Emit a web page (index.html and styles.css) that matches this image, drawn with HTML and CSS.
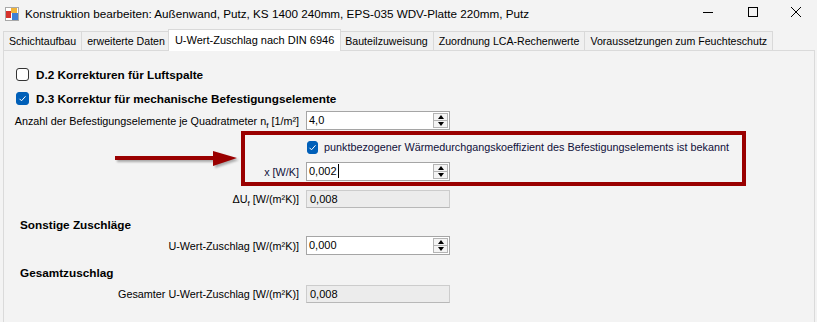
FILE: index.html
```html
<!DOCTYPE html>
<html>

<head>
    <meta charset="utf-8">
    <link rel="stylesheet" href="styles.css">
    <title>Konstruktion bearbeiten</title>
</head>

<body>
    <header class="titlebar">
        <svg class="app-icon" width="15" height="15" viewBox="0 0 15 15">
            <rect x="0.5" y="0.5" width="13" height="13" fill="#fff" stroke="#a8a8a8"/>
            <rect x="1" y="4" width="5" height="7" fill="#d6322c"/>
            <rect x="6" y="1" width="6" height="5" fill="#f0b43a"/>
            <rect x="7" y="6" width="6" height="7" fill="#3d7fd6"/>
        </svg>
        <span class="title">Konstruktion bearbeiten: Außenwand, Putz, KS 1400 240mm, EPS-035 WDV-Platte 220mm, Putz</span>
        <div class="controls">
            <span class="ctl"><svg width="10" height="10" viewBox="0 0 10 10"><path d="M0 5.5h10" stroke="#000" stroke-width="1"/></svg></span>
            <span class="ctl"><svg width="10" height="10" viewBox="0 0 10 10"><rect x="0.5" y="0.5" width="9" height="9" fill="none" stroke="#000"/></svg></span>
            <span class="ctl ctl-close"><svg width="10" height="10" viewBox="0 0 10 10"><path d="M0 0L10 10M10 0L0 10" stroke="#000" stroke-width="1"/></svg></span>
        </div>
    </header>

    <nav class="tabs">
        <span class="tab">Schichtaufbau</span>
        <span class="tab">erweiterte Daten</span>
        <span class="tab active">U-Wert-Zuschlag nach DIN 6946</span>
        <span class="tab">Bauteilzuweisung</span>
        <span class="tab">Zuordnung LCA-Rechenwerte</span>
        <span class="tab">Voraussetzungen zum Feuchteschutz</span>
    </nav>

    <section class="page">
        <div class="check heading row-d2">
            <span class="box"></span>D.2 Korrekturen für Luftspalte
        </div>
        <div class="check heading row-d3">
            <span class="box checked"><svg width="9" height="9" viewBox="0 0 9 9"><path d="M1.5 4.8l2 2 4-4.5" fill="none" stroke="#fff" stroke-width="1"/></svg></span>D.3 Korrektur für mechanische Befestigungselemente
        </div>

        <div class="field row-nf">
            <span class="label">Anzahl der Befestigungselemente je Quadratmeter n<sub>f</sub> [1/m²]</span>
            <div class="spin">
                <span class="value">4,0</span>
                <span class="arrows"><span class="up"></span><span class="down"></span></span>
            </div>
        </div>

        <div class="field row-pkt">
            <span class="label"></span>
            <div class="check inner">
                <span class="box checked"><svg width="9" height="9" viewBox="0 0 9 9"><path d="M1.5 4.8l2 2 4-4.5" fill="none" stroke="#fff" stroke-width="1"/></svg></span>punktbezogener Wärmedurchgangskoeffizient des Befestigungselements ist bekannt
            </div>
        </div>

        <div class="field row-x">
            <span class="label inner">x [W/K]</span>
            <div class="spin">
                <span class="value">0,002<i class="caret"></i></span>
                <span class="arrows"><span class="up"></span><span class="down"></span></span>
            </div>
        </div>

        <div class="field row-du">
            <span class="label">ΔU<sub>f</sub> [W/(m²K)]</span>
            <div class="readonly">0,008</div>
        </div>

        <div class="group-title row-sonst">Sonstige Zuschläge</div>
        <div class="field row-uz">
            <span class="label">U-Wert-Zuschlag [W/(m²K)]</span>
            <div class="spin">
                <span class="value">0,000</span>
                <span class="arrows"><span class="up"></span><span class="down"></span></span>
            </div>
        </div>

        <div class="group-title row-gesamt">Gesamtzuschlag</div>
        <div class="field row-gz">
            <span class="label">Gesamter U-Wert-Zuschlag [W/(m²K)]</span>
            <div class="readonly">0,008</div>
        </div>

        <!-- annotation drawn over the form -->
        <div class="callout"></div>
        <svg class="arrow" width="132" height="24" viewBox="0 0 132 24">
            <rect x="5" y="8" width="99" height="4" fill="#9a0000"/>
            <polygon points="103,3 127,10 103,18" fill="#9a0000"/>
        </svg>
    </section>
</body>

</html>
```

FILE: styles.css
```css
* {
    box-sizing: border-box;
}

html,
body {
    margin: 0;
    width: 817px;
    height: 322px;
    overflow: hidden;
}

body {
    font-family: "Liberation Sans", Arial, sans-serif;
    font-size: 10.8px;
    color: #000;
    background: #f3f3f3;
}

/* title bar */
.titlebar {
    height: 30px;
    display: flex;
    align-items: center;
    background: #f3f3f3;
}

.app-icon {
    margin-left: 5px;
    margin-top: -2px;
}

.title {
    margin-left: 5px;
    font-size: 11.7px;
    margin-top: -4px;
}

.controls {
    margin-left: auto;
    display: flex;
    align-self: stretch;
}

.ctl {
    width: 45px;
    display: flex;
    align-items: center;
    justify-content: center;
    padding-bottom: 6px;
}

.ctl-close {
    width: 42px;
}

/* tabs */
.tabs {
    height: 20px;
    display: flex;
    align-items: flex-end;
    padding-left: 3px;
}

.tab {
    height: 19px;
    padding: 0 5px;
    margin-right: -1px;
    border: 1px solid #d9d9d9;
    border-bottom: none;
    background: #f0f0f0;
    display: flex;
    align-items: center;
    white-space: nowrap;
    font-size: 10.6px;
}

.tab.active {
    position: relative;
    z-index: 1;
    height: 22px;
    margin: 0 -2px -1px -2px;
    padding: 0 6px 2px;
    background: #fff;
    font-size: 11px;
}

/* page */
.page {
    position: relative;
    margin-left: 3px;
    width: 812px;
    height: 272px;
    border: 1px solid #dadada;
    border-bottom: none;
    background: #f3f3f3;
    padding-top: 15px;
}

.check {
    display: flex;
    align-items: center;
    gap: 7px;
    height: 16px;
    white-space: nowrap;
}

.heading {
    padding-left: 12px;
    font-weight: bold;
    font-size: 11.75px;
}

.box {
    width: 13px;
    height: 13px;
    border: 1px solid #333;
    border-radius: 3px;
    background: #fff;
    display: flex;
    align-items: center;
    justify-content: center;
}

.box.checked {
    background: #005fb8;
    border-color: #005fb8;
}

.inner {
    color: #10103a;
}

.check.inner {
    gap: 6px;
    margin-left: 1px;
}

.field {
    display: grid;
    grid-template-columns: 295px 144px;
    column-gap: 7px;
    align-items: center;
}

.label {
    text-align: right;
    white-space: nowrap;
}

sub {
    font-size: 8px;
    vertical-align: -3px;
    line-height: 0;
}

.spin {
    height: 19px;
    display: flex;
    border: 1px solid #a5a5a5;
    background: #fff;
}

.value {
    flex: 1;
    padding-left: 2px;
    line-height: 17px;
    font-size: 11px;
}

.caret {
    display: inline-block;
    width: 1px;
    height: 14px;
    margin-left: 1px;
    vertical-align: -3px;
    background: #000;
}

.arrows {
    width: 16px;
    display: flex;
    flex-direction: column;
    padding: 1px 1px 1px 0;
}

.arrows span {
    flex: 1;
    border: 1px solid #b4b4b4;
    background: #f4f4f4;
    display: flex;
    align-items: center;
    justify-content: center;
}

.arrows span + span {
    border-top: none;
}

.up::before,
.down::before {
    content: "";
    border-left: 3.5px solid transparent;
    border-right: 3.5px solid transparent;
}

.up::before {
    border-bottom: 4px solid #000;
}

.down::before {
    border-top: 4px solid #000;
}

.readonly {
    height: 18px;
    border: 1px solid #cccccc;
    border-bottom-color: #b8b8b8;
    background: #ececec;
    padding-left: 3px;
    line-height: 16px;
    font-size: 11px;
}

.group-title {
    height: 16px;
    line-height: 16px;
    padding-left: 16px;
    font-weight: bold;
    font-size: 11.75px;
}

.row-d3 { margin-top: 8px; }
.row-nf { margin-top: 5px; }
.row-pkt { margin-top: 9px; }
.row-x { margin-top: 7px; }
.row-du { margin-top: 9px; }
.row-sonst { margin-top: 9px; }
.row-uz { margin-top: 3px; }
.row-gesamt { margin-top: 10px; }
.row-gz { margin-top: 4px; }

/* red annotation */
.callout {
    position: absolute;
    left: 237px;
    top: 80px;
    width: 505px;
    height: 55px;
    border: 4px solid #9a0000;
}

.arrow {
    position: absolute;
    left: 106px;
    top: 97px;
    filter: drop-shadow(2px 2px 1px rgba(0, 0, 0, 0.3));
}
```
